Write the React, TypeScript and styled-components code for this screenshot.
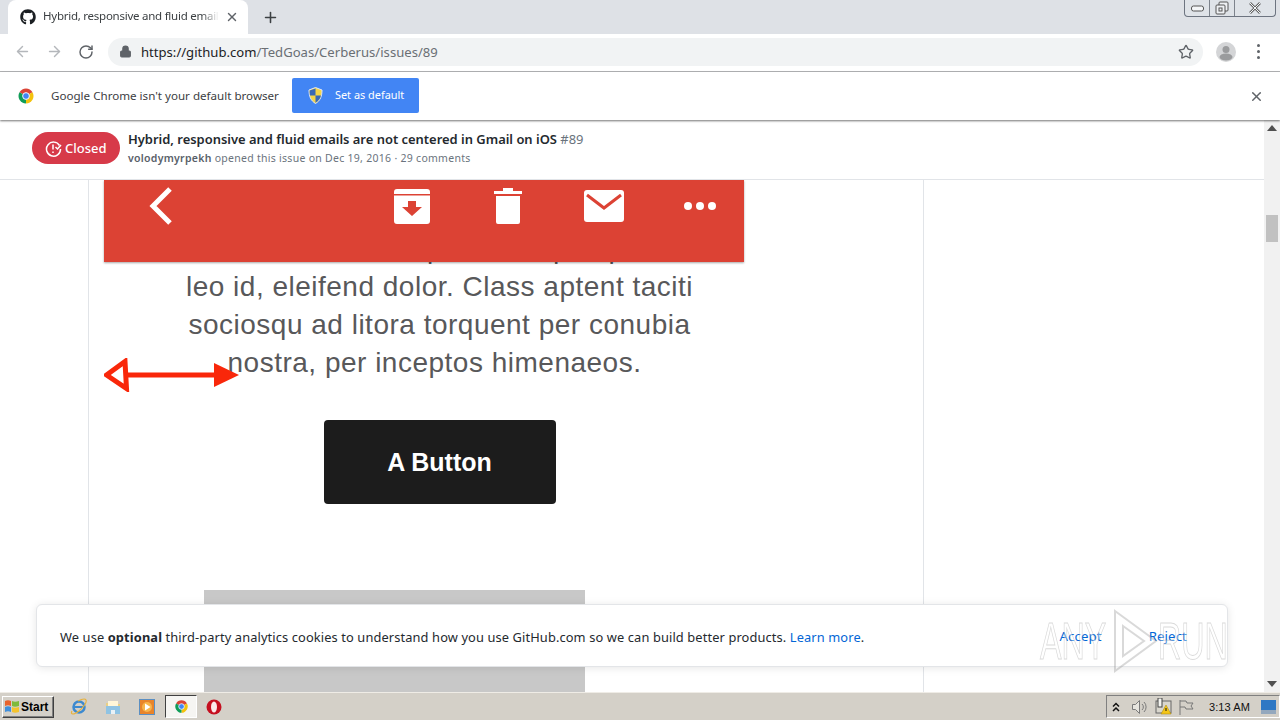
import React from "react";
import styled, { createGlobalStyle } from "styled-components";
import { FaGithub } from "react-icons/fa";
import { ArrowLeft, ArrowRight, RotateCw, Lock, Star, X, Plus } from "lucide-react";

const Global = createGlobalStyle`
  html, body { margin: 0; padding: 0; width: 1280px; height: 720px; overflow: hidden; background: #fff; }
  #root { width: 1280px; height: 720px; }
  * { box-sizing: border-box; }
`;
const UI = `"Noto Sans", "Open Sans", sans-serif`;

const Screen = styled.div`
  position: relative; width: 1280px; height: 720px; display: flex; flex-direction: column;
  font-family: ${UI}; overflow: hidden;
`;
const TabStrip = styled.div`
  height: 34px; background: #dee1e6; display: flex; align-items: flex-end; padding-left: 8px; flex: none; position: relative;
`;
const Tab = styled.div`
  width: 240px; height: 34px; background: #fff; border-radius: 8px 8px 0 0; display: flex; align-items: center;
  padding: 0 0 0 12px; color: #3c4043; font-size: 11.5px; gap: 6px;
`;
const TabTitle = styled.span`
  width: 176px; white-space: nowrap; overflow: hidden; letter-spacing: -0.25px; margin: -2px 0 0 1px; line-height: 16px;
  -webkit-mask-image: linear-gradient(90deg, #000 90%, transparent 100%);
  mask-image: linear-gradient(90deg, #000 90%, transparent 100%);
`;
const TabClose = styled.span`display: flex; color: #5f6368;`;
const NewTab = styled.span`display: flex; margin-left: 14px; margin-bottom: 8px; color: #3c4043;`;
const WinControls = styled.div`
  position: absolute; top: 0; left: 1184px; width: 92px; height: 17px; display: flex;
  border: 1px solid #6d7480; border-top: none; border-radius: 0 0 4px 4px; background: #dfe3e8;
`;
const WinBtn = styled.div<{ $w: number; $last?: boolean }>`
  width: ${(p) => p.$w}px; display: flex; align-items: center; justify-content: center;
  border-right: ${(p) => (p.$last ? "none" : "1px solid #7d838c")};
`;
const Toolbar = styled.div`
  height: 38px; background: #fff; border-bottom: 1px solid #b4b5b7; display: flex; align-items: center; flex: none;
  padding: 0 0 2px 14px; color: #9aa0a6;
`;
const NavSlot = styled.span<{ $dark?: boolean; $w?: number }>`
  display: flex; width: ${(p) => p.$w ?? 32}px; color: ${(p) => (p.$dark ? "#5f6368" : "#b4b7bb")};
`;
const Omnibox = styled.div`
  width: 1095px; height: 28px; border-radius: 14px; background: #f1f3f4;
  display: flex; align-items: center; padding: 0 9px 0 11px; font-size: 13.1px; color: #6a6f74;
`;
const Url = styled.span`margin-left: 9px; flex: 1; white-space: nowrap;`;
const UrlHost = styled.span`color: #202124;`;
const Avatar = styled.div`
  width: 20px; height: 20px; border-radius: 50%; background: #d4d5d7; margin-left: 13px; display: flex; overflow: hidden;
`;
const Kebab = styled.div`
  margin-left: 21px; width: 3px; display: flex; flex-direction: column; gap: 3px;
`;
const KebabDot = styled.i`display: block; width: 3px; height: 3px; background: #5f6368; border-radius: 50%;`;
const Infobar = styled.div`
  height: 48px; flex: none; background: #fff; display: flex; align-items: center; padding: 0 16px 0 17px; position: relative;
  z-index: 3; box-shadow: 0 1px 2px rgba(0,0,0,.55); font-size: 11.6px; color: #3c4043;
`;
const InfoText = styled.span`margin-left: 16px; width: 241px; white-space: nowrap; margin-top: -1px;`;
const DefaultBtn = styled.div`
  width: 127px; height: 35px; background: #4285f4; border-radius: 2px; color: #fff; display: flex; align-items: center;
  padding-left: 16px; gap: 12px; font-size: 10.9px; margin-top: -1px; line-height: 14px;
`;
const DefaultLabel = styled.span`margin-top: -2px;`;
const InfoClose = styled.span`display: flex; margin-left: auto; color: #5f6368;`;
const PageRow = styled.div`flex: 1; min-height: 0; display: flex; background: #fff;`;
const Viewport = styled.div`flex: 1; min-width: 0; display: flex; flex-direction: column; overflow: hidden;`;
const IssueHeader = styled.div`
  height: 60px; flex: none; border-bottom: 1px solid #e1e4e8; display: flex; padding: 12px 0 0 32px; background: #fff; position: relative; z-index: 2;
`;
const Pill = styled.div`
  width: 88px; height: 32px; border-radius: 16px; background: #d73a49; color: #fff; display: flex; align-items: center;
  padding-left: 13px; gap: 3px; font-size: 13px; font-weight: 500; flex: none;
`;
const IssueText = styled.div`margin-left: 8px; display: flex; flex-direction: column;`;
const IssueTitle = styled.div`font-size: 12.95px; line-height: 16px; font-weight: 600; color: #24292e; white-space: nowrap; margin-top: -1px;`;
const IssueNum = styled.span`font-weight: 400; color: #6a737d;`;
const IssueMeta = styled.div`font-size: 10.5px; line-height: 14px; margin-top: 4px; color: #6a737d; white-space: nowrap; letter-spacing: 0.28px;`;
const MetaUser = styled.span`color: #586069; font-weight: 600;`;
const Body = styled.div`flex: 1; min-height: 0; padding-left: 88px; overflow: hidden;`;
const Column = styled.div`
  width: 836px; height: 100%; border-left: 1px solid #e1e4e8; border-right: 1px solid #e1e4e8; padding-left: 15px;
  display: flex; flex-direction: column; align-items: flex-start;
`;
const EmailShot = styled.div`width: 640px; display: flex; flex-direction: column; align-items: center; position: relative;`;
const RedBar = styled.div`
  width: 640px; height: 82px; background: #dc4234; position: relative; z-index: 1; box-shadow: 0 1px 2px rgba(0,0,0,.35);
  display: flex; align-items: flex-start;
`;
const BarIcon = styled.svg<{ $ml: number; $mt: number }>`margin-left: ${(p) => p.$ml}px; margin-top: ${(p) => p.$mt}px; flex: none; display: block;`;
const EmailCopy = styled.div`
  margin: -32px 0 0 31px; width: 640px; text-align: center; font-family: "Liberation Sans", Arial, sans-serif; font-size: 28px;
  line-height: 38px; color: #58585a; letter-spacing: 0.5px;
`;
const EmailLine = styled.div<{ $trail?: number }>`white-space: nowrap; padding-right: ${(p) => p.$trail ?? 0}px;`;
const FakeButton = styled.div`
  width: 232px; height: 84px; margin: 38px 0 0 31px; background: #1c1c1c; border-radius: 4px; color: #fff; display: flex;
  align-items: center; justify-content: center; font-family: "Liberation Sans", Arial, sans-serif; font-weight: 700; font-size: 25px;
`;
const GrayBlock = styled.div`width: 381px; height: 110px; margin-top: 86px; margin-left: 100px; align-self: flex-start; background: #c8c8c8; flex: none;`;
const ArrowMark = styled.svg`position: absolute; left: 0; top: 178px; z-index: 1;`;
const Scrollbar = styled.div`
  width: 16px; flex: none; background: #f1f1f1; display: flex; flex-direction: column; align-items: center; padding: 5px 0 5px;
  justify-content: flex-start; position: relative;
`;
const ScrollThumb = styled.div`width: 12px; height: 27px; background: #c1c1c1; margin-top: 84px;`;
const ScrollDown = styled.div`margin-top: auto; display: flex;`;
const Cookie = styled.div`
  position: absolute; left: 36px; top: 604px; width: 1192px; height: 63px; background: #fff; border: 1px solid #e3e5e8;
  border-radius: 6px; box-shadow: 0 1px 8px rgba(0,0,0,.10); display: flex; align-items: center; padding: 2px 40px 0 23px;
  font-size: 12.84px; color: #24292e; z-index: 4; justify-content: space-between; letter-spacing: 0.12px;
`;
const CookieLink = styled.span`color: #0366d6;`;
const CookieActions = styled.div`display: flex; gap: 47px; color: #0366d6; font-size: 13.2px; font-weight: 400; margin-top: -2px;`;
const Watermark = styled.div`
  position: absolute; left: 1040px; top: 609px; height: 64px; z-index: 5; display: flex; align-items: center;
`;
const WmWord = styled.span<{ $w: number }>`
  width: ${(p) => p.$w}px; display: block; white-space: nowrap; font-family: "Liberation Sans", sans-serif; font-size: 52px; line-height: 64px;
  transform: scaleX(.62); transform-origin: left center; color: rgba(255,255,255,.35); -webkit-text-stroke: 1px rgba(130,130,130,.3);
`;
const WmPlay = styled.svg`margin: 0 0 0 6px; flex: none;`;
const Taskbar = styled.div`
  height: 28px; flex: none; background: #d4d0c8; border-top: 1px solid #efece6; display: flex; align-items: center; position: relative; padding-left: 2px;
`;
const StartBtn = styled.div`
  width: 52px; height: 22px; background: #d4d0c8; border: 1px solid; border-color: #fff #404040 #404040 #fff; box-shadow: inset -1px -1px 0 #808080;
  display: flex; align-items: center; gap: 1px; padding-left: 1px; font: 700 12px "Liberation Sans", sans-serif; color: #000;
`;
const TaskIcon = styled.div<{ $ml: number; $active?: boolean }>`
  margin-left: ${(p) => p.$ml}px; width: ${(p) => (p.$active ? 32 : 18)}px; height: ${(p) => (p.$active ? 23 : 18)}px; display: flex; align-items: center; justify-content: center;
  ${(p) => p.$active ? "background:#f6f5f2;border:1px solid;border-color:#404040 #fff #fff #404040;" : ""}
`;
const Tray = styled.div`
  margin-left: auto; width: 174px; height: 23px; border: 1px solid; border-color: #808080 #fff #fff #808080; display: flex; align-items: center;
  padding-left: 5px; font: 400 11px "Liberation Sans", sans-serif; color: #111;
`;
const Clock = styled.span`margin-left: 15px; white-space: nowrap; letter-spacing: .1px;`;
const TraySlot = styled.span<{ $ml?: number }>`display: flex; margin-left: ${(p) => p.$ml ?? 0}px;`;
const ChromeLogo = ({ s = 18 }: { s?: number }) => (
  <svg width={s} height={s} viewBox="0 0 48 48">
    <path d="M24 24 6.680 14A20 20 0 0 1 41.320 14z" fill="#db4437" />
    <path d="M24 24 41.320 14A20 20 0 0 1 24 44z" fill="#f4c20d" />
    <path d="M24 24V44A20 20 0 0 1 6.680 14z" fill="#0f9d58" />
    <circle cx="24" cy="24" r="9" fill="#4285f4" stroke="#fff" strokeWidth="2.500" />
  </svg>
);

const Shield = () => (
  <svg width="15" height="17" viewBox="0 0 15 17">
    <path d="M7.500 .5 14 3c0 6-1.500 10.500-6.500 13.500C2.500 13.500 1 9 1 3z" fill="#f5d547" stroke="#dfe7f5" />
    <path d="M7.500 1.500V8.500H2C1.700 7 1.600 5 1.600 3.500zM7.500 8.500H13c-.7 3-2.500 5.500-5.500 7.300z" fill="#3a68b5" />
  </svg>
);

const ClosedIcon = () => (
  <svg width="17" height="17" viewBox="0 0 17 17" fill="none" stroke="#fff" strokeWidth="1.500">
    <path d="M14.500 5.500A7 7 0 1 0 15.500 9" />
    <path d="M8 4.500v5M8 11.500v1.500" />
    <path d="M10.500 7l2 2 3.500-4" />
  </svg>
);

export default function App() {
  return (
    <Screen>
      <Global />
      <TabStrip>
        <Tab>
          <FaGithub size={16} color="#1b1f23" />
          <TabTitle>Hybrid, responsive and fluid emails are not centered</TabTitle>
          <TabClose><X size={14} strokeWidth={2.4} /></TabClose>
        </Tab>
        <NewTab><Plus size={17} strokeWidth={2.2} /></NewTab>
        <WinControls>
          <WinBtn $w={25}>
            <svg width="13" height="7" viewBox="0 0 13 7"><rect x=".5" y="1" width="12" height="5" rx="2" fill="#f4f6f8" stroke="#555" /></svg>
          </WinBtn>
          <WinBtn $w={25}>
            <svg width="14" height="14" viewBox="0 0 14 14" fill="#eef0f3" stroke="#555"><rect x="4" y="1" width="9" height="9" rx="1" /><rect x="1" y="4" width="9" height="9" rx="1" /><rect x="4" y="7" width="3" height="3" /></svg>
          </WinBtn>
          <WinBtn $w={40} $last>
            <svg width="14" height="12" viewBox="0 0 14 12"><path d="M2 1l10 10M12 1L2 11" stroke="#666" strokeWidth="2.500" /><path d="M2 1l10 10M12 1L2 11" stroke="#f4f6f8" strokeWidth="1" /></svg>
          </WinBtn>
        </WinControls>
      </TabStrip>
      <Toolbar>
        <NavSlot><ArrowLeft size={17} strokeWidth={2} /></NavSlot>
        <NavSlot><ArrowRight size={17} strokeWidth={2} /></NavSlot>
        <NavSlot $dark $w={30}><RotateCw size={16} strokeWidth={2.2} /></NavSlot>
        <Omnibox>
          <Lock size={13} color="#5f6368" fill="#5f6368" strokeWidth={2} />
          <Url><UrlHost>https://github.com</UrlHost>/TedGoas/Cerberus/issues/89</Url>
          <Star size={16} color="#5f6368" strokeWidth={2} />
        </Omnibox>
        <Avatar>
          <svg width="20" height="20" viewBox="0 0 20 20"><circle cx="10" cy="7.500" r="3.500" fill="#9a9b9d" /><ellipse cx="10" cy="15" rx="6.500" ry="3.500" fill="#9a9b9d" /></svg>
        </Avatar>
        <Kebab><KebabDot /><KebabDot /><KebabDot /></Kebab>
      </Toolbar>
      <Infobar>
        <ChromeLogo />
        <InfoText>Google Chrome isn't your default browser</InfoText>
        <DefaultBtn><Shield /><DefaultLabel>Set as default</DefaultLabel></DefaultBtn>
        <InfoClose><X size={15} strokeWidth={2.4} /></InfoClose>
      </Infobar>
      <PageRow>
        <Viewport>
          <IssueHeader>
            <Pill><ClosedIcon />Closed</Pill>
            <IssueText>
              <IssueTitle>Hybrid, responsive and fluid emails are not centered in Gmail on iOS <IssueNum>#89</IssueNum></IssueTitle>
              <IssueMeta><MetaUser>volodymyrpekh</MetaUser> opened this issue on Dec 19, 2016 · 29 comments</IssueMeta>
            </IssueText>
          </IssueHeader>
          <Body>
            <Column>
              <EmailShot>
                <RedBar>
                  <BarIcon $ml={44} $mt={7} width="26" height="38" viewBox="0 0 26 38"><path d="M22 2 5 19l17 17" fill="none" stroke="#fff" strokeWidth="5" /></BarIcon>
                  <BarIcon $ml={220} $mt={8} width="36" height="36" viewBox="0 0 36 36">
                    <path d="M0 4a3 3 0 0 1 3-3h30a3 3 0 0 1 3 3v2H0zM0 7.500h36V33a3 3 0 0 1-3 3H3a3 3 0 0 1-3-3z" fill="#fff" />
                    <path d="M14 13h8v6h6l-10 9-10-9h6z" fill="#dc4234" />
                  </BarIcon>
                  <BarIcon $ml={63} $mt={8} width="30" height="36" viewBox="0 0 30 36">
                    <path d="M1 3h9V0h10v3h9v3H1zM3 8h24v26a2 2 0 0 1-2 2H5a2 2 0 0 1-2-2z" fill="#fff" />
                  </BarIcon>
                  <BarIcon $ml={61} $mt={10} width="40" height="32" viewBox="0 0 40 32">
                    <rect width="40" height="32" rx="3" fill="#fff" />
                    <path d="M3 5l17 13L37 5" fill="none" stroke="#dc4234" strokeWidth="3" />
                  </BarIcon>
                  <BarIcon $ml={60} $mt={20} width="32" height="12" viewBox="0 0 32 12" fill="#fff">
                    <circle cx="4" cy="6" r="4" /><circle cx="16" cy="6" r="4" /><circle cx="28" cy="6" r="4" />
                  </BarIcon>
                </RedBar>
                <EmailCopy>
                  <EmailLine>Maecenas sed ante pellentesque, posuere</EmailLine>
                  <EmailLine>leo id, eleifend dolor. Class aptent taciti</EmailLine>
                  <EmailLine>sociosqu ad litora torquent per conubia</EmailLine>
                  <EmailLine $trail={10}>nostra, per inceptos himenaeos.</EmailLine>
                </EmailCopy>
                <FakeButton>A Button</FakeButton>
                <ArrowMark width="136" height="34" viewBox="0 0 136 34">
                  <path d="M22 17h90" stroke="#f9270a" strokeWidth="5" />
                  <path d="M2.500 17 21 3.500l1.500 27z" fill="#fff" stroke="#f9270a" strokeWidth="5" />
                  <path d="M110 5l25 12-25 12z" fill="#f9270a" />
                </ArrowMark>
              </EmailShot>
              <GrayBlock />
            </Column>
          </Body>
        </Viewport>
        <Scrollbar>
          <svg width="10" height="6" viewBox="0 0 10 6"><path d="M5 0l5 6H0z" fill="#505050" /></svg>
          <ScrollThumb />
          <ScrollDown><svg width="10" height="6" viewBox="0 0 10 6"><path d="M0 0h10L5 6z" fill="#505050" /></svg></ScrollDown>
        </Scrollbar>
      </PageRow>
      <Taskbar>
        <StartBtn>
          <svg width="16" height="15" viewBox="0 0 16 15">
            <path d="M1 2c2-1 4-1 6 0v5C5 6 3 6 1 7z" fill="#e8632d" />
            <path d="M8 2c2 1 4 1 7 0v5c-3 1-5 1-7 0z" fill="#7fba3c" />
            <path d="M1 8c2-1 4-1 6 0v5c-2-1-4-1-6 0z" fill="#3f8fdc" />
            <path d="M8 8c2 1 4 1 7 0v5c-3 1-5 1-7 0z" fill="#f4c32d" />
          </svg>
          Start
        </StartBtn>
        <TaskIcon $ml={16}>
          <svg width="18" height="18" viewBox="0 0 18 18">
            <circle cx="9" cy="9" r="5.500" fill="none" stroke="#3d8ad0" strokeWidth="2.500" />
            <path d="M4 9h10" stroke="#3d8ad0" strokeWidth="2" />
            <path d="M2 13C0 17 4 17 9 13s8-9 7-11-6 0-8 1" fill="none" stroke="#e8b23c" strokeWidth="1.200" />
          </svg>
        </TaskIcon>
        <TaskIcon $ml={16}>
          <svg width="16" height="16" viewBox="0 0 16 16">
            <path d="M1 4h5l1 1h8v10H1z" fill="#e9cf86" />
            <path d="M3 2h10v5H3z" fill="#fff6d8" />
            <path d="M1 7h14v8H1z" fill="#8fc3e3" />
            <path d="M6 15v-4h4v4z" fill="#e9f1f6" />
          </svg>
        </TaskIcon>
        <TaskIcon $ml={16}>
          <svg width="16" height="16" viewBox="0 0 16 16">
            <rect x=".5" y=".5" width="15" height="15" fill="#e8842a" stroke="#5b8fc2" />
            <circle cx="8" cy="8" r="5" fill="#f8b44a" />
            <path d="M6 4.500 11.500 8 6 11.500z" fill="#fff" />
          </svg>
        </TaskIcon>
        <TaskIcon $ml={9} $active><ChromeLogo s={15} /></TaskIcon>
        <TaskIcon $ml={8}>
          <svg width="16" height="16" viewBox="0 0 16 16">
            <ellipse cx="8" cy="8" rx="7.500" ry="7.500" fill="#c50f1f" />
            <ellipse cx="8" cy="8" rx="3" ry="5.500" fill="#fbe9ea" />
          </svg>
        </TaskIcon>
        <Tray>
          <TraySlot>
            <svg width="8" height="10" viewBox="0 0 8 10" fill="none" stroke="#111" strokeWidth="1.500"><path d="M1 4.500l3-3 3 3M1 9l3-3 3 3" /></svg>
          </TraySlot>
          <TraySlot $ml={11}>
            <svg width="17" height="16" viewBox="0 0 17 16" fill="none" stroke="#7a7a7a"><path d="M1.500 5.500h3l4-4v13l-4-4h-3z" fill="#e6e4de" /><path d="M11 5a4 4 0 0 1 0 6M13 3a7 7 0 0 1 0 10" /></svg>
          </TraySlot>
          <TraySlot $ml={7}>
            <svg width="17" height="17" viewBox="0 0 17 17">
              <rect x="1" y="3" width="15" height="12" fill="#d9d6cd" stroke="#666" />
              <rect x="3" y="0" width="4" height="9" fill="#f4f4f0" stroke="#444" />
              <path d="M11 7l5 9H6z" fill="#f4c518" stroke="#a88500" strokeWidth=".5" />
              <path d="M11 10v3" stroke="#111" />
            </svg>
          </TraySlot>
          <TraySlot $ml={6}>
            <svg width="16" height="16" viewBox="0 0 16 16" fill="none" stroke="#777"><path d="M2 1v15M2 2h6l1 2h6l-2 3 2 3H8L7 8H2" /></svg>
          </TraySlot>
          <Clock>3:13 AM</Clock>
          <TraySlot $ml={11}>
            <svg width="15" height="14" viewBox="0 0 15 14"><rect width="15" height="14" fill="#2f78c4" /><rect y="10" width="15" height="4" fill="#94a8bd" /></svg>
          </TraySlot>
        </Tray>
      </Taskbar>
      <Cookie>
        <span>We use <strong>optional</strong> third-party analytics cookies to understand how you use GitHub.com so we can build better products. <CookieLink>Learn more</CookieLink>.</span>
        <CookieActions><span>Accept</span><span>Reject</span></CookieActions>
      </Cookie>
      <Watermark>
        <WmWord $w={66}>ANY</WmWord>
        <WmPlay width="46" height="64" viewBox="0 0 46 64" fill="rgba(255,255,255,.3)" stroke="rgba(130,130,130,.3)" strokeWidth="2">
          <path d="M3 2l41 30L3 62z" /><path d="M11 17l21 15-21 15z" />
        </WmPlay>
        <WmWord $w={70}>RUN</WmWord>
      </Watermark>
    </Screen>
  );
}
